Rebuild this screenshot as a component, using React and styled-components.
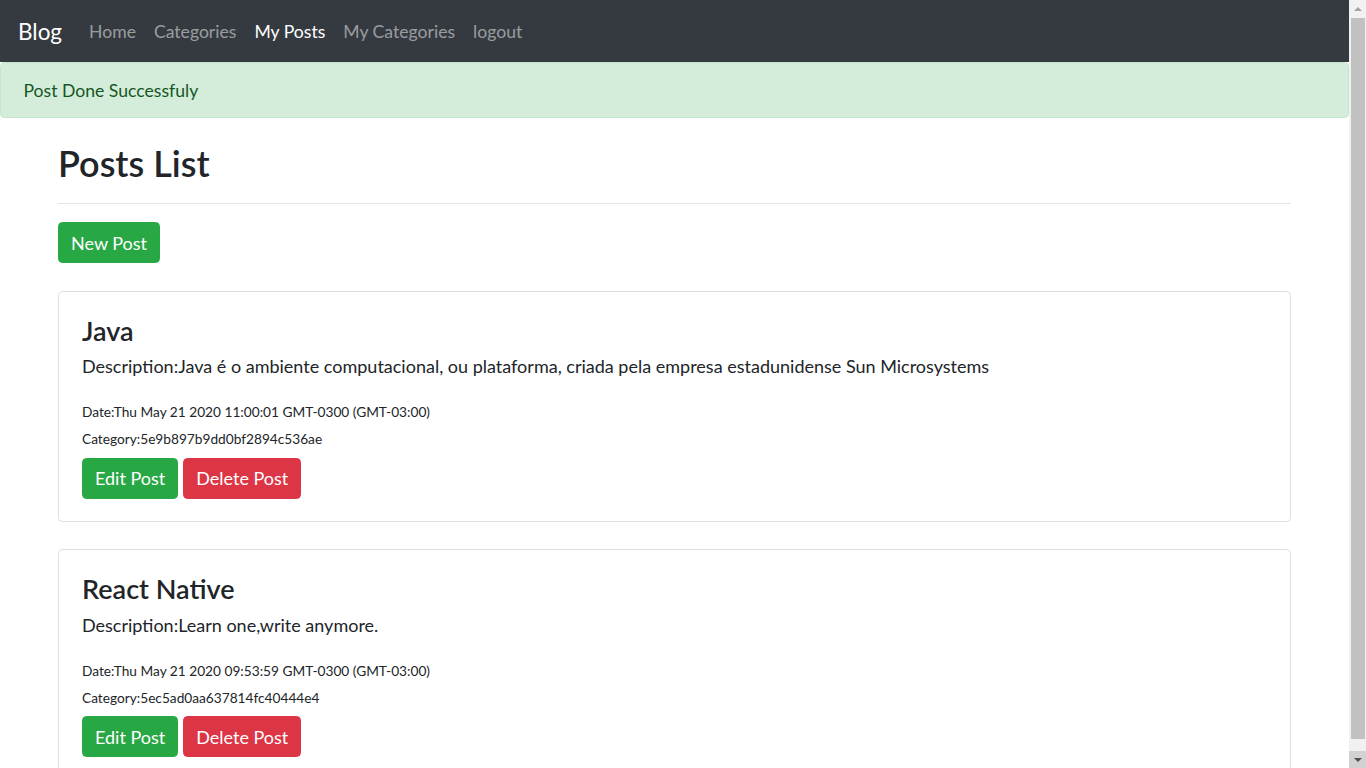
import React from 'react';
import styled, { createGlobalStyle } from 'styled-components';

const GlobalStyle = createGlobalStyle`
  html, body {
    margin: 0;
    padding: 0;
    background: #fff;
  }
  body {
    font-family: Lato, "Open Sans", sans-serif;
    font-size: 18px;
    line-height: 27px;
    color: #212529;
  }
  * {
    box-sizing: border-box;
  }
`;

const Shell = styled.div`
  display: flex;
  height: 100vh;
  overflow: hidden;
`;

const Page = styled.div`
  flex: 1;
  min-width: 0;
`;

/* fake window scrollbar, the reference shows one */
const ScrollBar = styled.div`
  display: flex;
  flex-direction: column;
  width: 17px;
  background: #f1f1f1;
`;

const ScrollButton = styled.div`
  display: flex;
  align-items: center;
  justify-content: center;
  height: 17px;
  background: ${props => (props.hover ? '#d2d2d2' : '#f1f1f1')};
`;

const Arrow = styled.span`
  width: 0;
  height: 0;
  border-left: 4px solid transparent;
  border-right: 4px solid transparent;
  ${props => (props.down
    ? 'border-top: 4px solid #505050;'
    : 'border-bottom: 4px solid #a3a3a3;')}
`;

const Track = styled.div`
  flex: 1;
  padding: 1px 1px 12px 2px;
`;

const Thumb = styled.div`
  height: 100%;
  background: #c1c1c1;
`;

const Navbar = styled.nav`
  display: flex;
  align-items: center;
  height: 62px;
  padding: 0 18px;
  background: #343a40;
`;

const Brand = styled.a`
  font-size: 22.5px;
  color: #fff;
  margin-right: 18px;
  text-decoration: none;
`;

const NavLink = styled.a`
  padding: 0 9px;
  font-size: 17.6px;
  color: ${props => (props.active ? '#fff' : 'rgba(255,255,255,.5)')};
  text-decoration: none;
  cursor: pointer;
`;

const Alert = styled.div`
  padding: 13.5px 22.5px;
  font-size: 17.6px;
  background: #d4edda;
  border: 1px solid #c3e6cb;
  border-radius: 4.5px;
  color: #155724;
`;

const Main = styled.main`
  padding: 0 58px;
`;

const Title = styled.h1`
  margin: 18px 0 0;
  font-size: 36px;
  font-weight: 600;
  line-height: 54px;
`;

const Rule = styled.hr`
  margin: 13px 0 18px;
  border: 0;
  border-top: 1px solid rgba(0,0,0,.1);
`;

const Button = styled.button`
  display: inline-block;
  height: 41px;
  padding: 0 12px;
  font-family: inherit;
  font-size: 18px;
  color: #fff;
  border: 1px solid ${props => (props.danger ? '#dc3545' : '#28a745')};
  background: ${props => (props.danger ? '#dc3545' : '#28a745')};
  border-radius: 4.5px;
  cursor: pointer;
`;

const Card = styled.div`
  margin-top: ${props => (props.first ? '28px' : '27px')};
  padding: 22.5px 23px;
  border: 1px solid rgba(0,0,0,.125);
  border-radius: 4.5px;
`;

const CardTitle = styled.h4`
  margin: 0 0 6.5px;
  font-size: 27px;
  font-weight: 600;
  line-height: 32.4px;
`;

const Description = styled.p`
  margin: 0 0 18px;
`;

const Meta = styled.p`
  margin: 0 0 5.5px;
  font-size: 13.7px;
`;

const Actions = styled.div`
  display: flex;
  gap: 5px;
`;

const posts = [
  {
    id: 1,
    title: 'Java',
    description: 'Java é o ambiente computacional, ou plataforma, criada pela empresa estadunidense Sun Microsystems',
    date: 'Thu May 21 2020 11:00:01 GMT-0300 (GMT-03:00)',
    category: '5e9b897b9dd0bf2894c536ae',
  },
  {
    id: 2,
    title: 'React Native',
    description: 'Learn one,write anymore.',
    date: 'Thu May 21 2020 09:53:59 GMT-0300 (GMT-03:00)',
    category: '5ec5ad0aa637814fc40444e4',
  },
];

export default function App() {
  return (
    <Shell>
      <GlobalStyle />
      <Page>
        <Navbar>
          <Brand>Blog</Brand>
          <NavLink>Home</NavLink>
          <NavLink>Categories</NavLink>
          <NavLink active>My Posts</NavLink>
          <NavLink>My Categories</NavLink>
          <NavLink>logout</NavLink>
        </Navbar>
        <Alert>Post Done Successfuly</Alert>
        <Main>
          <Title>Posts List</Title>
          <Rule />
          <Button>New Post</Button>
          {posts.map((post, i) => (
            <Card key={post.id} first={i === 0}>
              <CardTitle>{post.title}</CardTitle>
              <Description>Description:{post.description}</Description>
              <Meta>
                Date:{post.date}
                <br />
                Category:{post.category}
              </Meta>
              <Actions>
                <Button>Edit Post</Button>
                <Button danger>Delete Post</Button>
              </Actions>
            </Card>
          ))}
        </Main>
      </Page>
      <ScrollBar>
        <ScrollButton><Arrow /></ScrollButton>
        <Track><Thumb /></Track>
        <ScrollButton hover><Arrow down /></ScrollButton>
      </ScrollBar>
    </Shell>
  );
}
